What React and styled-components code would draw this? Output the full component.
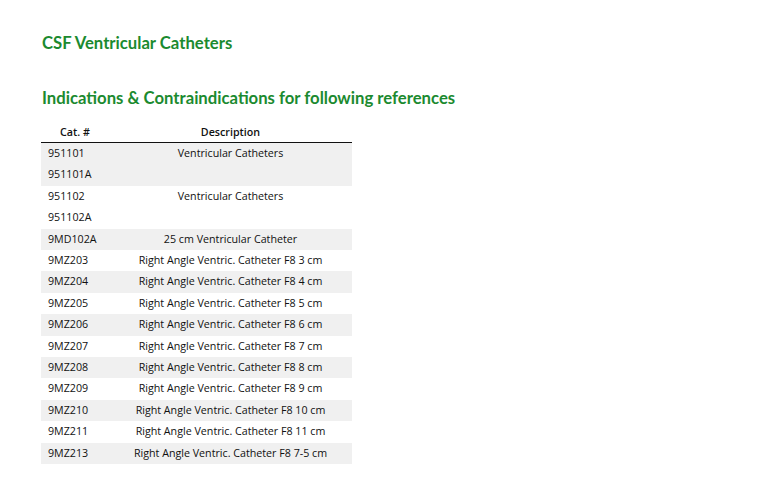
import React from 'react';
import styled, { createGlobalStyle } from 'styled-components';

const rows = [
  { cat: ['951101', '951101A'], desc: 'Ventricular Catheters' },
  { cat: ['951102', '951102A'], desc: 'Ventricular Catheters' },
  { cat: ['9MD102A'], desc: '25 cm Ventricular Catheter' },
  { cat: ['9MZ203'], desc: 'Right Angle Ventric. Catheter F8 3 cm' },
  { cat: ['9MZ204'], desc: 'Right Angle Ventric. Catheter F8 4 cm' },
  { cat: ['9MZ205'], desc: 'Right Angle Ventric. Catheter F8 5 cm' },
  { cat: ['9MZ206'], desc: 'Right Angle Ventric. Catheter F8 6 cm' },
  { cat: ['9MZ207'], desc: 'Right Angle Ventric. Catheter F8 7 cm' },
  { cat: ['9MZ208'], desc: 'Right Angle Ventric. Catheter F8 8 cm' },
  { cat: ['9MZ209'], desc: 'Right Angle Ventric. Catheter F8 9 cm' },
  { cat: ['9MZ210'], desc: 'Right Angle Ventric. Catheter F8 10 cm' },
  { cat: ['9MZ211'], desc: 'Right Angle Ventric. Catheter F8 11 cm' },
  { cat: ['9MZ213'], desc: 'Right Angle Ventric. Catheter F8 7-5 cm' },
];

const App = () => (
  <Page>
    <GlobalStyle />
    <Title>CSF Ventricular Catheters</Title>
    <SubTitle>Indications &amp; Contraindications for following references</SubTitle>
    <Table>
      <thead>
        <tr>
          <HeadCell width="68px">Cat. #</HeadCell>
          <HeadCell>Description</HeadCell>
        </tr>
      </thead>
      <tbody>
        {rows.map((row, i) => (
          <Row key={row.cat[0]} striped={i % 2 === 0}>
            <CatCell>
              {row.cat.map((c) => (
                <CatLine key={c}>{c}</CatLine>
              ))}
            </CatCell>
            <DescCell>{row.desc}</DescCell>
          </Row>
        ))}
      </tbody>
    </Table>
  </Page>
);

export default App;

const GlobalStyle = createGlobalStyle`
  body {
    margin: 0;
    background: #fff;
    font-family: "Open Sans", "Noto Sans", sans-serif;
    color: #111;
  }
`;

const Page = styled.div`
  padding: 31px 42px 20px;
`;

const Title = styled.h1`
  margin: 0;
  font-family: Lato, "Open Sans", sans-serif;
  font-size: 16.7px;
  line-height: 24px;
  font-weight: 700;
  color: #1b8a2f;
`;

const SubTitle = styled.h2`
  margin: 31px 0 0;
  font-family: Lato, "Open Sans", sans-serif;
  font-size: 16.7px;
  line-height: 24px;
  font-weight: 700;
  color: #1b8a2f;
`;

const Table = styled.table`
  margin-top: 14px;
  margin-left: -1px;
  width: 311px;
  border-collapse: collapse;
  font-size: 10.7px;
  font-weight: 500;
`;

const HeadCell = styled.th`
  width: ${(p) => p.width || 'auto'};
  padding: 0 0 2px;
  font-weight: 600;
  text-align: center;
  line-height: 16px;
  border-bottom: 1.5px solid #111;
`;

const Row = styled.tr`
  background: ${(p) => (p.striped ? '#f0f0f0' : '#fff')};
`;

const CatCell = styled.td`
  padding: 0 0 0 7px;
  vertical-align: top;
  text-align: left;
`;

const CatLine = styled.div`
  height: 21.4px;
  line-height: 21.4px;
`;

const DescCell = styled.td`
  padding: 0;
  vertical-align: top;
  text-align: center;
  line-height: 21.4px;
`;
